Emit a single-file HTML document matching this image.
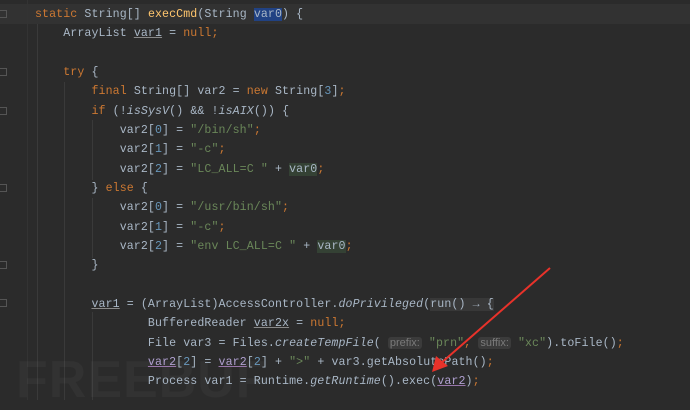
<!DOCTYPE html>
<html><head><style>
body{margin:0;width:690px;height:400px;background:#2b2b2b;overflow:hidden;position:relative;font-family:"Liberation Mono",monospace;}
.code{position:absolute;left:35px;top:5px;font-size:11.6px;letter-spacing:0.1px;line-height:19.33px;color:#a9b7c6;white-space:pre;}
.k{color:#cc7832}.s{color:#6a8759}.n{color:#6897bb}.i{font-style:italic}
.u{text-decoration:underline;text-decoration-color:#8a8a8a;}
.p{color:#b0a0d0;text-decoration:underline;text-decoration-color:#9876aa}
.hb{background:#214283}.hg{background:#344134}
.hint{background:#3b3b3b;color:#7a7a7a;font-family:"Liberation Sans",sans-serif;font-size:11px;letter-spacing:0;border-radius:3px;padding:0 2px}
.rb{background:#383838}
.cur{position:absolute;left:0;top:4px;width:690px;height:20px;background:#323232}
.g{position:absolute;width:1px;background:#3a3a3a}
.f{position:absolute;left:0;width:7px;height:8px;border:1px solid #555;border-left:none;box-sizing:border-box}
.wm{position:absolute;left:16px;top:350px;font:bold 52px "Liberation Sans",sans-serif;color:rgba(255,255,255,0.035);letter-spacing:1px}
</style></head><body>
<div class="cur"></div>
<div class="g" style="left:27px;top:0;height:400px;background:#333"></div>
<div class="g" style="left:37px;top:24px;height:376px"></div>
<div class="g" style="left:64px;top:82px;height:318px"></div>
<div class="g" style="left:92px;top:120px;height:60px"></div>
<div class="g" style="left:92px;top:198px;height:60px"></div>
<div class="g" style="left:92px;top:312px;height:88px"></div>
<div class="f" style="top:10px"></div><div class="f" style="top:68px"></div><div class="f" style="top:107px"></div><div class="f" style="top:184px"></div><div class="f" style="top:261px"></div><div class="f" style="top:299px"></div>
<div class="wm">FREEBUF</div>
<div class="code"><span class="k">static </span>String[] <span style="color:#ffc66d">execCmd</span>(String <span class="hb">var0</span>) {
    ArrayList <span class="u">var1</span> = <span class="k">null;</span>

    <span class="k">try </span>{
        <span class="k">final </span>String[] var2 = <span class="k">new </span>String[<span class="n">3</span>]<span class="k">;</span>
        <span class="k">if </span>(!<span class="i">isSysV</span>() &amp;&amp; !<span class="i">isAIX</span>()) {
            var2[<span class="n">0</span>] = <span class="s">"/bin/sh"</span><span class="k">;</span>
            var2[<span class="n">1</span>] = <span class="s">"-c"</span><span class="k">;</span>
            var2[<span class="n">2</span>] = <span class="s">"LC_ALL=C "</span> + <span class="hg">var0</span><span class="k">;</span>
        } <span class="k">else </span>{
            var2[<span class="n">0</span>] = <span class="s">"/usr/bin/sh"</span><span class="k">;</span>
            var2[<span class="n">1</span>] = <span class="s">"-c"</span><span class="k">;</span>
            var2[<span class="n">2</span>] = <span class="s">"env LC_ALL=C "</span> + <span class="hg">var0</span><span class="k">;</span>
        }

        <span class="u">var1</span> = (ArrayList)AccessController.<span class="i">doPrivileged</span>(<span class="rb">run() → {</span>
                BufferedReader <span class="u">var2x</span> = <span class="k">null;</span>
                File var3 = Files.<span class="i">createTempFile</span>( <span class="hint">prefix:</span> <span class="s">"prn"</span><span class="k">,</span> <span class="hint">suffix:</span> <span class="s">"xc"</span>).toFile()<span class="k">;</span>
                <span class="p">var2</span>[<span class="n">2</span>] = <span class="p">var2</span>[<span class="n">2</span>] + <span class="s">"&gt;"</span> + var3.getAbsolutePath()<span class="k">;</span>
                Process var1 = Runtime.<span class="i">getRuntime</span>().exec(<span class="p">var2</span>)<span class="k">;</span>
</div>
<svg style="position:absolute;left:0;top:0" width="690" height="400">
<line x1="550" y1="268" x2="440" y2="364" stroke="#e8322a" stroke-width="2"/>
<polygon points="432,372 436,356 448,366" fill="#e8322a"/>
</svg>
</body></html>
